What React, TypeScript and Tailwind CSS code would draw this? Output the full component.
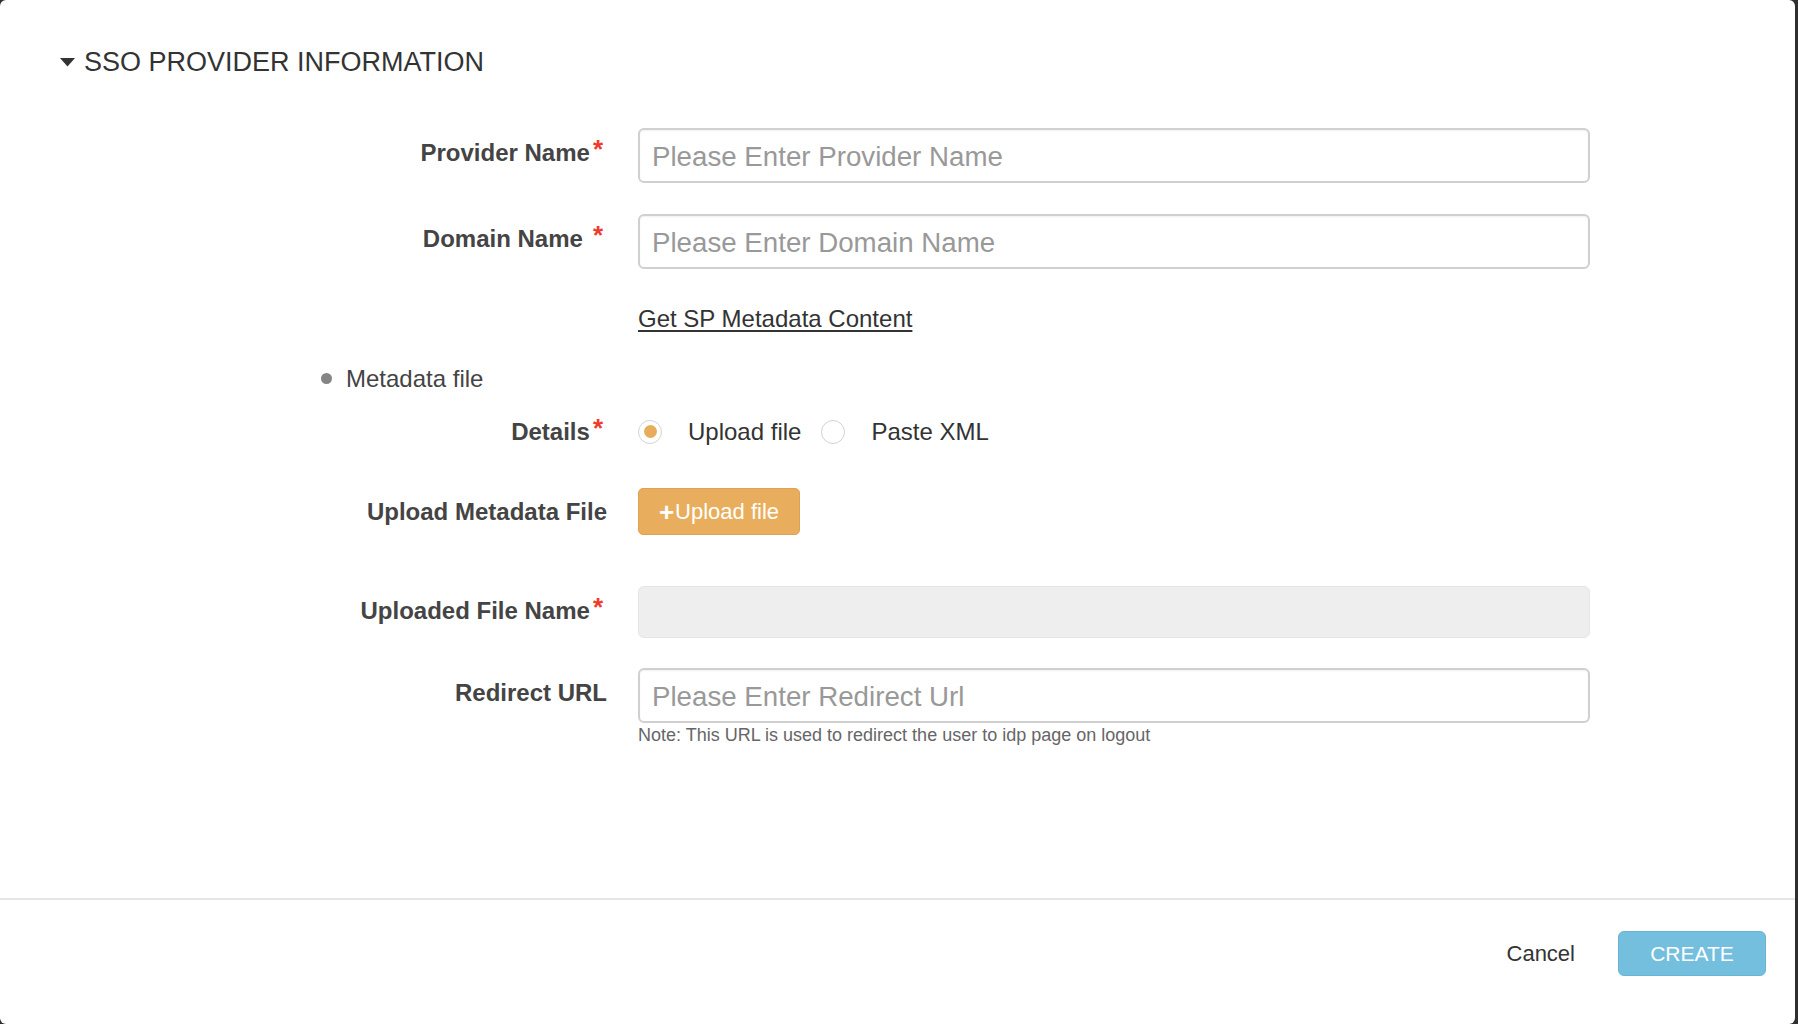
import React from "react";

function Star({ spaced }: { spaced?: boolean }) {
  return (
    <span className={`relative -top-[3px] text-[26px] font-bold text-[#ef3b2d] ${spaced ? "ml-[10px]" : "ml-[3px]"}`}>*</span>
  );
}

function Label({ children, star, spaced, className = "" }: { children: React.ReactNode; star?: boolean; spaced?: boolean; className?: string }) {
  return (
    <div className={`w-[607px] shrink-0 text-right text-[24px] leading-[29px] font-bold text-[#444] ${star ? "pr-[4px]" : ""} ${className}`}>
      {children}
      {star && <Star spaced={spaced} />}
    </div>
  );
}

function TextInput({ placeholder, disabled }: { placeholder?: string; disabled?: boolean }) {
  if (disabled) {
    return <div className="ml-[31px] w-[952px] h-[52px] rounded-[6px] bg-[#eeeeee] border border-[#e6e6e6]" />;
  }
  return (
    <input
      placeholder={placeholder}
      className="ml-[31px] w-[952px] h-[55px] rounded-[6px] border-2 border-[#d0d0d0] bg-white pl-[12px] pt-[2px] text-[27.7px] text-[#333] placeholder:text-[#999] outline-none shadow-[inset_0_1px_2px_rgba(0,0,0,0.06)] font-['Liberation_Sans',Arial,sans-serif]"
    />
  );
}

function Radio({ checked }: { checked?: boolean }) {
  return (
    <span className="flex h-[24px] w-[24px] items-center justify-center rounded-full border-[1.5px] border-[#d3d3d3] bg-white">
      {checked && <span className="h-[13px] w-[13px] rounded-full bg-[#e8ad5c]" />}
    </span>
  );
}

export default function App() {
  return (
    <div className="w-[1798px] h-[1024px] bg-[#2f2f2f] overflow-hidden font-['Liberation_Sans',Arial,sans-serif]">
      <div className="flex h-[1024px] w-[1795px] flex-col rounded-[6px] bg-white">
        {/* Header */}
        <div className="mt-[46px] flex h-[32px] items-center pl-[60px]">
          <svg width="15" height="9" viewBox="0 0 15 9" className="mr-[9px]">
            <polygon points="0,0 15,0 7.5,8.5" fill="#333" />
          </svg>
          <span className="text-[27px] leading-[32px] text-[#333]">SSO PROVIDER INFORMATION</span>
        </div>

        {/* Provider Name */}
        <div className="mt-[50px] flex items-start">
          <Label star className="pt-[10px]">Provider Name</Label>
          <TextInput placeholder="Please Enter Provider Name" />
        </div>

        {/* Domain Name */}
        <div className="mt-[31px] flex items-start">
          <Label star spaced className="pt-[10px]">Domain Name</Label>
          <TextInput placeholder="Please Enter Domain Name" />
        </div>

        {/* Link */}
        <div className="mt-[35px] flex">
          <div className="w-[638px] shrink-0" />
          <a className="text-[24px] leading-[29px] text-[#333] underline underline-offset-[3px] decoration-[1.5px]">Get SP Metadata Content</a>
        </div>

        {/* Metadata file */}
        <div className="mt-[31px] flex items-center pl-[321px]">
          <span className="h-[11px] w-[11px] rounded-full bg-[#858585]" />
          <span className="ml-[14px] text-[24px] leading-[29px] text-[#444]">Metadata file</span>
        </div>

        {/* Details */}
        <div className="mt-[24px] flex items-center">
          <Label star>Details</Label>
          <div className="ml-[31px] flex items-center text-[24px] leading-[29px] text-[#333]">
            <Radio checked />
            <span className="ml-[26px]">Upload file</span>
            <span className="ml-[20px]"><Radio /></span>
            <span className="ml-[26px]">Paste XML</span>
          </div>
        </div>

        {/* Upload Metadata File */}
        <div className="mt-[42px] flex items-center">
          <Label className="text-[24.3px]">Upload Metadata File</Label>
          <button className="ml-[31px] flex h-[47px] w-[162px] items-center justify-center rounded-[5px] border border-[#e0a24f] bg-[#e9ae5d] text-[22px] text-white">
            <span className="mr-[1px] text-[26px] font-bold leading-none">+</span>Upload file
          </button>
        </div>

        {/* Uploaded File Name */}
        <div className="mt-[51px] flex items-start">
          <Label star className="pt-[10px]">Uploaded File Name</Label>
          <TextInput disabled />
        </div>

        {/* Redirect URL */}
        <div className="mt-[30px] flex items-start">
          <Label className="pt-[10px]">Redirect URL</Label>
          <TextInput placeholder="Please Enter Redirect Url" />
        </div>
        <div className="mt-[2px] flex">
          <div className="w-[638px] shrink-0" />
          <span className="text-[18px] leading-[20px] text-[#666]">Note: This URL is used to redirect the user to idp page on logout</span>
        </div>

        <div className="flex-1" />

        {/* Footer */}
        <div className="h-[2px] w-full bg-[#e6e6e6]" />
        <div className="mt-[31px] flex items-center justify-end pr-[29px]">
          <button className="text-[22px] text-[#333]">Cancel</button>
          <button className="ml-[43px] flex h-[45px] w-[148px] items-center justify-center rounded-[6px] border border-[#69b4d4] bg-[#74bfde] text-[21px] text-white">
            CREATE
          </button>
        </div>
        <div className="h-[48px]" />
      </div>
    </div>
  );
}
